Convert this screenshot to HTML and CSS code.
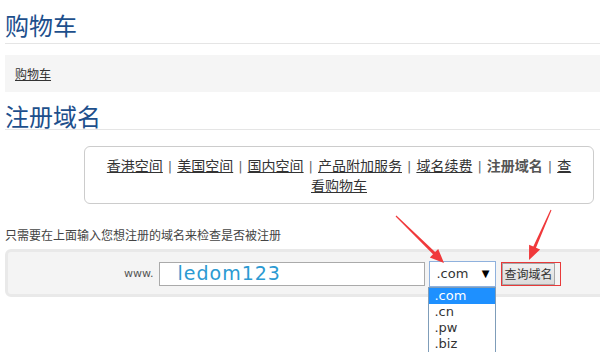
FILE: index.html
```html
<!DOCTYPE html>
<html lang="zh-CN">
<head>
    <meta charset="UTF-8">
    <title>注册域名</title>
    <link rel="stylesheet" href="styles.css">
</head>
<body>
    <h1 class="title">购物车</h1>
    <div class="crumb"><a href="#">购物车</a></div>

    <h1 class="title title-tight">注册域名</h1>
    <div class="nav"><a href="#">香港空间</a><span class="sep">|</span><a href="#">美国空间</a><span class="sep">|</span><a href="#">国内空间</a><span class="sep">|</span><a href="#">产品附加服务</a><span class="sep">|</span><a href="#">域名续费</a><span class="sep">|</span><strong>注册域名</strong><span class="sep">|</span><a href="#">查看购物车</a></div>

    <p class="hint">只需要在上面输入您想注册的域名来检查是否被注册</p>
    <div class="search">
        <span class="www">www.</span>
        <div class="domain">ledom123</div>
        <div class="select-wrap">
            <div class="select">.com<span class="caret">▼</span></div>
            <ul class="options">
                <li class="active">.com</li>
                <li>.cn</li>
                <li>.pw</li>
                <li>.biz</li>
            </ul>
        </div>
        <span class="btn-mark"><button class="btn">查询域名</button></span>
    </div>

    <svg class="arrows" width="600" height="354" viewBox="0 0 600 354">
        <polygon points="395.6,216.4 433,254.3 429.8,257.5 444,263 438.2,248.9 435.1,252.1 396.4,215.6" />
        <polygon points="550.5,209.8 533.3,246.6 529.1,244.8 529,260 540.1,249.6 536,247.8 551.5,210.2" />
    </svg>
</body>
</html>
```

FILE: styles.css
```css
html {
    overflow: hidden;
}
body {
    margin: 0;
    padding: 0 0 0 5px;
    min-height: 354px;
    position: relative;
    font-family: "Noto Sans CJK SC", sans-serif;
    font-size: 12px;
    color: #333;
}
.title {
    margin: 10px 0 0 0;
    font-size: 24px;
    font-weight: 400;
    line-height: 30px;
    color: #1d4f8c;
    padding-bottom: 3px;
    border-bottom: 1px solid #e5e5e5;
}
.title-tight {
    margin-top: 11px;
    line-height: 26px;
    padding-bottom: 0;
}
.crumb {
    margin-top: 11px;
    height: 37px;
    line-height: 37px;
    padding-left: 10px;
    background-color: #f5f5f5;
}
.crumb a {
    color: #333;
}
.nav {
    margin: 16px 6px 0 79px;
    padding: 9px 20px;
    border: 1px solid #ccc;
    border-radius: 6px;
    text-align: center;
    font-size: 14px;
    line-height: 18px;
    color: #555;
}
.nav a {
    color: #333;
}
.nav strong {
    color: #555;
}
.sep {
    margin: 0 5px;
    font-family: "DejaVu Sans", sans-serif;
    font-size: 13px;
    color: #666;
}
.hint {
    margin: 23px 0 6px 0;
    font-size: 12px;
    line-height: 16px;
    color: #444;
}
.search {
    display: flex;
    align-items: flex-start;
    height: 22px;
    padding: 10px 0 10px 116px;
    margin-right: -20px;
    background-color: #f4f4f4;
    border: 3px solid #e9e9e9;
    border-radius: 6px;
}
.www {
    line-height: 24px;
    margin-right: 6px;
    color: #555;
    font-family: "DejaVu Sans", sans-serif;
    font-size: 11px;
}
.domain {
    box-sizing: border-box;
    width: 266px;
    height: 24px;
    border: 1px solid #aaa;
    background-color: #fff;
    padding-left: 17px;
    font-family: "DejaVu Sans", sans-serif;
    font-size: 19px;
    line-height: 21px;
    letter-spacing: 1px;
    color: #2b9ad2;
}
.select-wrap {
    position: relative;
    margin-left: 4px;
    margin-top: -1px;
}
.select {
    box-sizing: border-box;
    width: 67px;
    height: 26px;
    border: 1px solid #8fb1dd;
    background-color: #fff;
    padding-left: 6px;
    font-family: "DejaVu Sans", sans-serif;
    font-size: 13px;
    line-height: 24px;
    color: #333;
    position: relative;
}
.caret {
    position: absolute;
    right: 6px;
    top: 0;
    font-size: 10px;
    color: #000;
}
.options {
    position: absolute;
    left: -1px;
    top: 26px;
    width: 66px;
    margin: 0;
    padding: 0;
    list-style: none;
    background-color: #fff;
    border: 1px solid #7f9db9;
    border-bottom: none;
    font-family: "DejaVu Sans", sans-serif;
    font-size: 13px;
    color: #333;
}
.options li {
    height: 16px;
    line-height: 16px;
    padding-left: 5px;
}
.options li.active {
    background-color: #1e90ff;
    color: #fff;
}
.btn-mark {
    margin-left: 5px;
    padding-right: 5px;
    border: 1px solid #e83a3a;
    display: flex;
}
.btn {
    height: 22px;
    padding: 0 1px;
    margin: 0;
    border: 1px solid #a8a8a8;
    background: linear-gradient(#f0f0f0, #dcdcdc);
    font-family: "Noto Sans CJK SC", sans-serif;
    font-size: 12px;
    line-height: 18px;
    color: #333;
}
.arrows {
    position: absolute;
    left: 0;
    top: 0;
    pointer-events: none;
}
.arrows polygon {
    fill: #f0393b;
}
```
